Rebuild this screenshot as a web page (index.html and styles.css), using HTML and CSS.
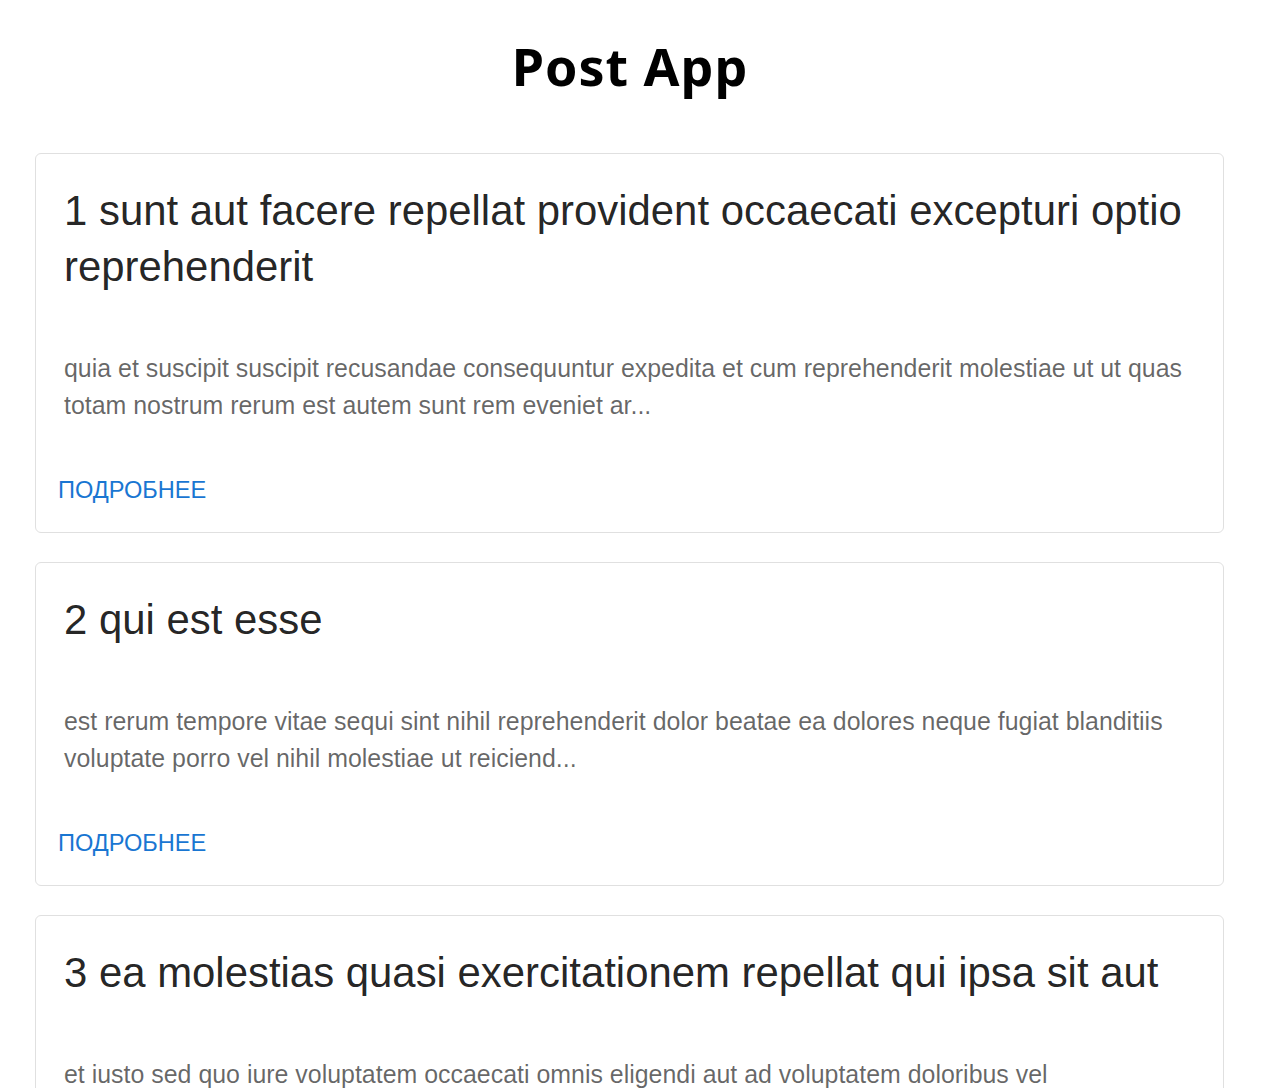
FILE: index.html
```html
<!DOCTYPE html>
<html lang="ru">
<head>
<meta charset="utf-8">
<title>Post App</title>
<link rel="stylesheet" href="styles.css">
</head>
<body>
<h1 class="app-title">Post App</h1>
<div class="post-list">
  <div class="card">
    <div class="card-content">
      <h3 class="post-title">1 sunt aut facere repellat provident occaecati excepturi optio reprehenderit</h3>
      <p class="post-body">quia et suscipit suscipit recusandae consequuntur expedita et cum reprehenderit molestiae ut ut quas totam nostrum rerum est autem sunt rem eveniet ar...</p>
    </div>
    <div class="card-actions"><button class="more-btn">Подробнее</button></div>
  </div>
  <div class="card">
    <div class="card-content">
      <h3 class="post-title">2 qui est esse</h3>
      <p class="post-body">est rerum tempore vitae sequi sint nihil reprehenderit dolor beatae ea dolores neque fugiat blanditiis voluptate porro vel nihil molestiae ut reiciend...</p>
    </div>
    <div class="card-actions"><button class="more-btn">Подробнее</button></div>
  </div>
  <div class="card">
    <div class="card-content">
      <h3 class="post-title">3 ea molestias quasi exercitationem repellat qui ipsa sit aut</h3>
      <p class="post-body">et iusto sed quo iure voluptatem occaecati omnis eligendi aut ad voluptatem doloribus vel accusantium quis pariatur molestiae porro eius odio et lab...</p>
    </div>
    <div class="card-actions"><button class="more-btn">Подробнее</button></div>
  </div>
</div>
</body>
</html>
```
FILE: styles.css
```css
html, body {
  margin: 0;
  padding: 0;
  background: #ffffff;
}
body {
  font-family: "Liberation Sans", Arial, sans-serif;
}
.app-title {
  font-family: "Noto Sans", "Open Sans", sans-serif;
  font-weight: 700;
  font-size: 52px;
  line-height: 60px;
  letter-spacing: 1px;
  margin: 36px 0 57px;
  width: 1260px;
  text-align: center;
  color: #000;
}
.post-list {
  margin-left: 35px;
  width: 1189px;
  display: flex;
  flex-direction: column;
  gap: 29px;
}
.card {
  border: 1px solid #e0e0e0;
  border-radius: 6px;
  background: #fff;
}
.card-content {
  padding: 29px 36px 27px 28px;
}
.post-title {
  margin: 0 0 55px;
  font-weight: 400;
  font-size: 41.9px;
  line-height: 56px;
  color: rgba(0, 0, 0, 0.87);
}
.post-body {
  margin: 0;
  font-size: 24.93px;
  line-height: 37px;
  color: rgba(0, 0, 0, 0.6);
}
.card-actions {
  padding: 12px 12px 15px;
}
.more-btn {
  font-family: "Liberation Sans", Arial, sans-serif;
  background: none;
  border: none;
  padding: 9px 11px 9px 10px;
  font-size: 23.6px;
  line-height: 36px;
  text-transform: uppercase;
  color: #1976d2;
  cursor: pointer;
}
```
